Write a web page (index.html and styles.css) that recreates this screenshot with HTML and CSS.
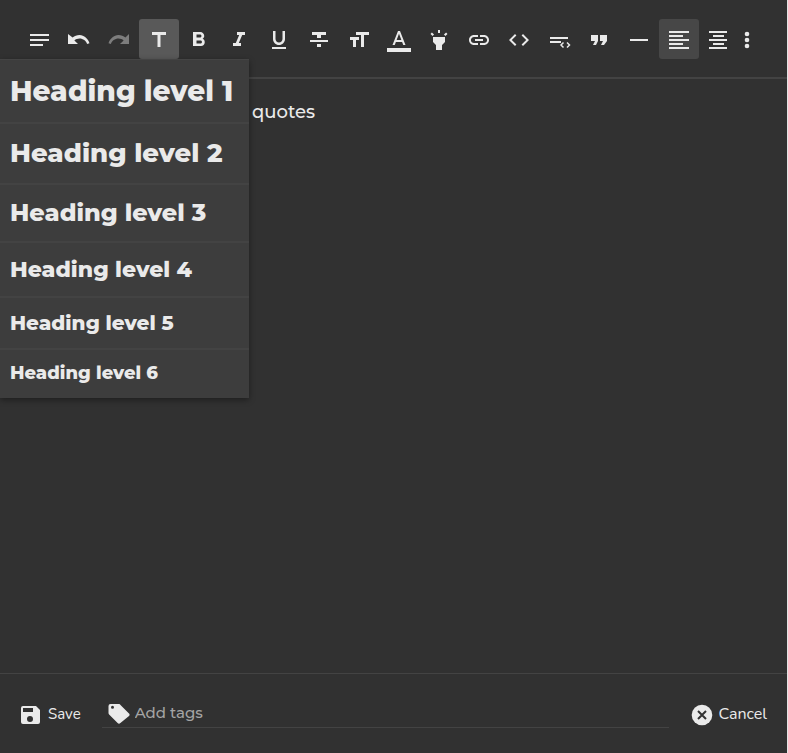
FILE: index.html
```html
<!DOCTYPE html>
<html lang="en">
<head>
<meta charset="utf-8">
<meta name="viewport" content="width=device-width, initial-scale=1">
<title>Note editor</title>
<link rel="stylesheet" href="styles.css">
</head>
<body>
<div class="app">
  <header class="toolbar" role="toolbar" aria-label="Formatting">
    <button class="tool" aria-label="Paragraph"><svg viewBox="0 0 24 24"><path d="M3 6h19v2H3zM3 11h19v2H3zM3 16h13v2H3z"/></svg></button>
    <button class="tool" aria-label="Undo"><svg viewBox="0 0 24 24"><path d="M12.500 7c-2.650 0-5.050.99-6.900 2.600L1 6v10h10l-3.620-3.620c1.390-1.160 3.160-1.880 5.120-1.880 3.540 0 6.550 2.310 7.600 5.500l2.370-.78C21.080 10.830 17.150 7 12.500 7z"/></svg></button>
    <button class="tool" aria-label="Redo" disabled><svg viewBox="0 0 24 24"><path d="M18.400 9.600C16.550 7.990 14.150 7 11.500 7c-4.650 0-8.580 3.830-9.960 8.220L3.900 16c1.050-3.190 4.050-5.500 7.600-5.500 1.950 0 3.730.72 5.120 1.880L13 16h9V6z"/></svg></button>
    <button class="tool tool-open" aria-label="Headings" aria-expanded="true"><svg viewBox="0 0 24 24"><path d="M5 4v3h5.500v12h3V7H19V4z"/></svg></button>
    <button class="tool" aria-label="Bold"><svg viewBox="0 0 24 24"><path d="M15.600 10.790c.97-.67 1.650-1.770 1.650-2.790 0-2.260-1.750-4-4-4H6v14h8.040c2.090 0 3.710-1.700 3.710-3.790 0-1.520-.86-2.820-2.150-3.420zM9.500 6.500H13c.83 0 1.500.67 1.500 1.500s-.67 1.500-1.500 1.500H9.500zm4 9h-4v-3h4c.83 0 1.500.67 1.500 1.500s-.67 1.500-1.500 1.500z"/></svg></button>
    <button class="tool" aria-label="Italic"><svg viewBox="0 0 24 24"><path d="M10 4v3h2.210l-3.420 8H6v3h8v-3h-2.210l3.420-8H18V4z"/></svg></button>
    <button class="tool" aria-label="Underline"><svg viewBox="0 0 24 24"><path d="M12 17c3.310 0 6-2.690 6-6V3h-2.500v8c0 1.930-1.570 3.500-3.500 3.500S8.500 12.930 8.500 11V3H6v8c0 3.310 2.690 6 6 6zm-7 2v2h14v-2z"/></svg></button>
    <button class="tool" aria-label="Strikethrough"><svg viewBox="0 0 24 24"><path d="M10 19h4v-3h-4zM5 4v3h5v3h4V7h5V4zM3 14h18v-2H3z"/></svg></button>
    <button class="tool" aria-label="Text size"><svg viewBox="0 0 24 24"><path d="M9 4v3h5v12h3V7h5V4zm-6 8h3v7h3v-7h3V9H3z"/></svg></button>
    <button class="tool" aria-label="Text colour"><svg viewBox="0 0 24 24"><path d="M0 20h24v4H0zM11 3L5.500 17h2.250l1.120-3h6.250l1.120 3h2.250L13 3zm-1.380 9L12 5.670 14.380 12z"/></svg></button>
    <button class="tool" aria-label="Highlight"><svg viewBox="0 0 24 24"><path d="M6 14l3 3v5h6v-5l3-3V9H6zm5-12h2v3h-2zM3.500 5.880l1.410-1.410 2.120 2.120L5.620 8zm13.460.71l2.120-2.120 1.410 1.410L18.380 8z"/></svg></button>
    <button class="tool" aria-label="Link"><svg viewBox="0 0 24 24"><path d="M3.900 12c0-1.710 1.390-3.100 3.100-3.100h4V7H7c-2.760 0-5 2.240-5 5s2.240 5 5 5h4v-1.900H7c-1.710 0-3.100-1.390-3.100-3.100zM8 13h8v-2H8zm9-6h-4v1.900h4c1.710 0 3.100 1.390 3.100 3.100s-1.390 3.100-3.100 3.100h-4V17h4c2.760 0 5-2.240 5-5s-2.240-5-5-5z"/></svg></button>
    <button class="tool" aria-label="Code"><svg viewBox="0 0 24 24"><path d="M9.400 16.600L4.800 12l4.600-4.600L8 6l-6 6 6 6zm5.200 0l4.600-4.600-4.600-4.600L16 6l6 6-6 6z"/></svg></button>
    <button class="tool" aria-label="Code block"><svg viewBox="0 0 24 24"><path d="M3 9h18v2H3zM3 13h11v2H3z"/><path class="stroke" d="M16.500 14.500l-2.500 2.500 2.500 2.500M20 14.500l2.500 2.500-2.500 2.500"/></svg></button>
    <button class="tool" aria-label="Quote"><svg viewBox="0 0 24 24"><path d="M6 17h3l2-4V7H4v6h4zm8 0h3l3-4V7h-7v6h3z"/></svg></button>
    <button class="tool" aria-label="Horizontal rule"><svg viewBox="0 0 24 24"><path d="M3 11h18v2H3z"/></svg></button>
    <button class="tool tool-on" aria-label="Align left" aria-pressed="true"><svg viewBox="0 0 24 24"><path d="M2 3h20v2H2zM2 7h14v2H2zM2 11h20v2H2zM2 15h14v2H2zM2 19h20v2H2z"/></svg></button>
    <button class="tool tool-cut" aria-label="Align centre"><svg viewBox="0 0 24 24"><path d="M3 3h18v2H3zM7 7h11v2H7zM3 11h18v2H3zM7 15h11v2H7zM3 19h18v2H3z"/></svg></button>
    <button class="tool tool-more" aria-label="More"><svg viewBox="0 0 24 24"><circle cx="12" cy="6" r="2.300"/><circle cx="12" cy="12" r="2.300"/><circle cx="12" cy="18" r="2.300"/></svg></button>
    <div class="menu" role="menu">
      <button class="item h1" role="menuitem">Heading level 1</button>
      <button class="item h2" role="menuitem">Heading level 2</button>
      <button class="item h3" role="menuitem">Heading level 3</button>
      <button class="item h4" role="menuitem">Heading level 4</button>
      <button class="item h5" role="menuitem">Heading level 5</button>
      <button class="item h6" role="menuitem">Heading level 6</button>
    </div>
  </header>
  <main class="editor"><p>quotes</p></main>
  <footer class="footer">
    <button class="action"><svg viewBox="0 0 24 24"><path fill-rule="evenodd" d="M4 4h13l4 4v12a2 2 0 0 1-2 2H4a2 2 0 0 1-2-2V6a2 2 0 0 1 2-2zM4 6v4h10V6zM11 14a3 3 0 1 0 0 6 3 3 0 0 0 0-6z"/></svg>Save</button>
    <div class="tags">
      <label for="tags" aria-label="Tags"><svg viewBox="0 0 24 24"><path fill-rule="evenodd" d="M22 12.600l-8.500-8.500A2 2 0 0 0 12 3H3.500a2 2 0 0 0-2 2v7c0 .6.200 1.100.6 1.500l8.500 8.600c.8.800 2 .8 2.800 0l8.600-7c.8-.8.8-1.700 0-2.500zM5.500 4.800a1.500 1.500 0 1 1 0 3 1.500 1.500 0 0 1 0-3z"/></svg></label>
      <input id="tags" type="text" placeholder="Add tags">
    </div>
    <button class="action action-cancel"><svg viewBox="0 0 24 24"><circle cx="12" cy="13" r="10.300"/><path class="cross" d="M8 9l8 8M16 9l-8 8"/></svg>Cancel</button>
  </footer>
</div>
</body>
</html>
```
FILE: styles.css
```css
* { box-sizing: border-box; }

body {
  margin: 0;
  background: #313131;
  color: #eaeaea;
  font-family: Montserrat, Inter, sans-serif;
}

.app {
  display: flex;
  flex-direction: column;
  min-height: 100vh;
  border-right: 1px solid #e4e4e4;
}

button {
  padding: 0;
  border: 0;
  background: none;
  color: inherit;
  font: inherit;
}

svg {
  display: block;
  flex: none;
  width: 24px;
  height: 24px;
  fill: currentColor;
}

.toolbar {
  position: relative;
  display: flex;
  padding: 19px 19px 18px;
  border-bottom: 2px solid #434343;
}

.tool {
  display: flex;
  flex: none;
  justify-content: center;
  width: 40px;
  height: 40px;
  padding-top: 9px;
  border-radius: 3px;
}

.tool:disabled { color: #7d7d7d; }
.tool-open { background: #595959; }
.tool-on { background: #474747; }
.tool-cut { width: 38px; }
.tool-more { width: 20px; }

.stroke {
  fill: none;
  stroke: currentColor;
  stroke-width: 1.5;
}

.menu {
  position: absolute;
  top: 59px;
  left: 0;
  z-index: 1;
  width: 249px;
  border-top: 1px solid #444;
  background: #3d3d3d;
  box-shadow: 0 2px 6px rgba(0, 0, 0, 0.4);
}

.item {
  display: block;
  width: 100%;
  padding: 0 10px 1px;
  border-bottom: 2px solid #434343;
  font-weight: 800;
  text-align: left;
  white-space: nowrap;
}

.item:last-child { border-bottom: 0; }

.h1 { height: 64px; padding-bottom: 0; font-size: 28px; }
.h2 { height: 61px; font-size: 26px; }
.h3 { height: 58px; font-size: 24px; }
.h4 { height: 55px; font-size: 22px; }
.h5 { height: 52px; font-size: 20px; }
.h6 { height: 48px; padding-bottom: 2px; font-size: 18px; }

.editor {
  flex: 1;
  padding: 21px 20px 20px 252px;
  font-size: 18px;
  font-weight: 500;
  line-height: 24px;
}

.editor p { margin: 0; }

.footer {
  display: flex;
  align-items: center;
  gap: 21px;
  height: 80px;
  padding: 0 20px 0 19px;
  border-top: 1px solid #434343;
}

.action {
  display: flex;
  align-items: center;
  gap: 5px;
  height: 32px;
  font: 15px/24px Nunito, Lato, sans-serif;
}

.action-cancel {
  gap: 4px;
  font-size: 16px;
}

.cross {
  fill: none;
  stroke: #313131;
  stroke-width: 2;
}

.tags {
  display: flex;
  flex: 1;
  align-items: center;
  gap: 4px;
  height: 28px;
  padding-left: 5px;
  border-bottom: 1px solid #434343;
}

.tags input {
  flex: 1;
  min-width: 0;
  padding: 0;
  border: 0;
  outline: 0;
  background: none;
  color: inherit;
  font: 500 15px/24px Montserrat, "Noto Sans", sans-serif;
}

.tags input::placeholder { color: #a4a4a4; opacity: 1; }
```
